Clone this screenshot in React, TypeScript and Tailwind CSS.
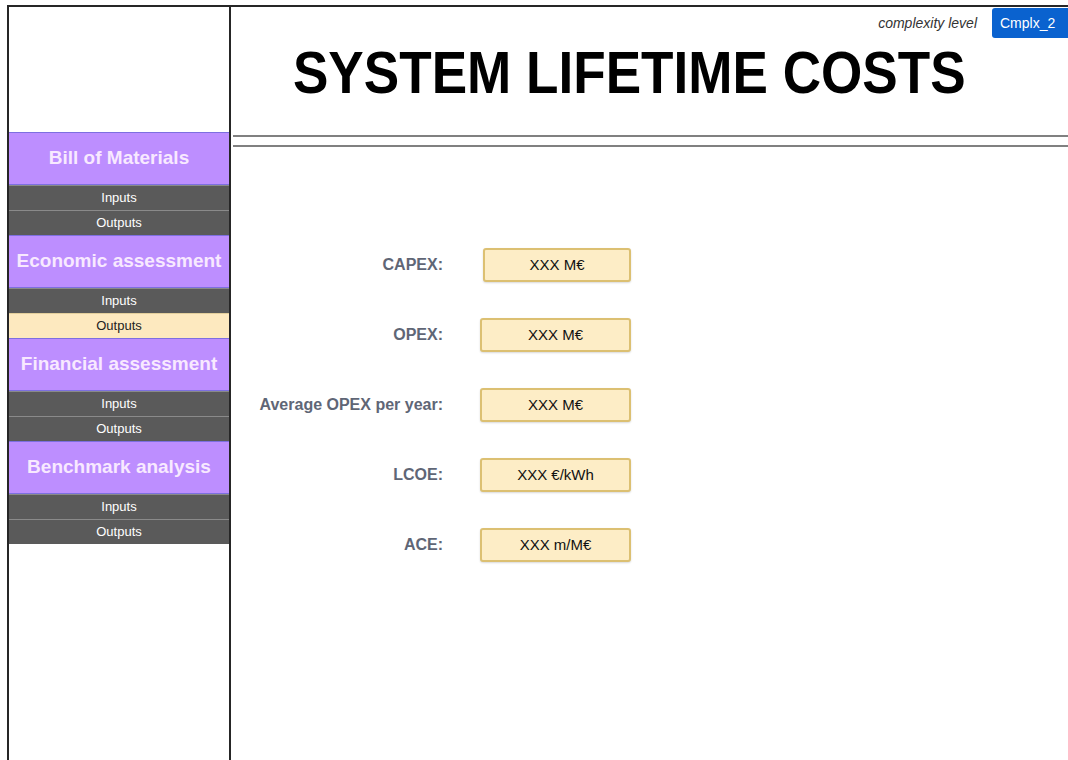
import { Fragment } from 'react'

const sections = [
  { title: 'Bill of Materials', active: null },
  { title: 'Economic assessment', active: 'Outputs' },
  { title: 'Financial assessment', active: null },
  { title: 'Benchmark analysis', active: null },
]

const results = [
  { label: 'CAPEX:', value: 'XXX M€' },
  { label: 'OPEX:', value: 'XXX M€' },
  { label: 'Average OPEX per year:', value: 'XXX M€' },
  { label: 'LCOE:', value: 'XXX €/kWh' },
  { label: 'ACE:', value: 'XXX m/M€' },
]

function NavLink({ label, active }: { label: string; active: boolean }) {
  return (
    <div
      className={
        active
          ? 'h-[25px] flex items-center justify-center bg-[#fde9bf] border-t border-[#e3cf9c] text-[13px] text-[#222]'
          : 'h-[25px] flex items-center justify-center bg-[#5a5a5a] border-t border-[#8a8a8a] text-[13px] text-white'
      }
    >
      {label}
    </div>
  )
}

export default function App() {
  return (
    <div
      className="w-[1068px] h-[760px] overflow-hidden bg-white pl-[7px] pt-[5px]"
      style={{ fontFamily: '"Liberation Sans", Arial, sans-serif' }}
    >
      <div className="flex h-[800px] border-l-2 border-t-2 border-[#262626]">
        {/* Sidebar navigation */}
        <aside className="w-[222px] shrink-0 border-r-2 border-[#262626] flex flex-col">
          <div className="h-[125px]" />
          {sections.map((s) => (
            <div key={s.title} className="flex flex-col">
              <div className="h-[53px] flex items-center justify-center bg-[#bd8eff] border-y border-[#7d6fe0] text-[19px] font-bold text-[#f8e9ff]">
                {s.title}
              </div>
              <NavLink label="Inputs" active={s.active === 'Inputs'} />
              <NavLink label="Outputs" active={s.active === 'Outputs'} />
            </div>
          ))}
        </aside>

        {/* Main panel */}
        <main className="flex-1 flex flex-col">
          <div className="h-[128px] flex flex-col">
            <div className="flex justify-end items-center gap-[15px] pt-[1px]">
              <span className="italic text-[14px] text-[#333]">complexity level</span>
              <span className="bg-[#0a62cf] text-white text-[14px] h-[30px] w-[76px] pl-[8px] flex items-center rounded-tl-[3px] rounded-bl-[3px]">
                Cmplx_2
              </span>
            </div>
            <h1 className="pl-[70px] mt-[4px] text-[60px] leading-[62px] font-bold text-black origin-left scale-x-[0.885] whitespace-nowrap">
              SYSTEM LIFETIME COSTS
            </h1>
          </div>

          <div className="ml-[2px] flex flex-col gap-[8px]">
            <div className="h-[2px] bg-[#808080]" />
            <div className="h-[2px] bg-[#808080]" />
          </div>

          {/* Cost summary */}
          <div className="mt-[101px] grid grid-cols-[212px_151px] gap-x-[37px] gap-y-[36px] items-center">
            {results.map((r, i) => (
              <Fragment key={r.label}>
                <span className="text-right text-[16px] font-bold text-[#5f6676]">{r.label}</span>
                <div
                  className={
                    'h-[34px] flex items-center justify-center bg-[#fdedc6] border-2 border-[#dcc072] rounded-[3px] shadow-[0_1px_2px_rgba(0,0,0,0.15)] text-[15px] text-[#111] ' +
                    (i === 0 ? 'ml-[3px]' : '')
                  }
                >
                  {r.value}
                </div>
              </Fragment>
            ))}
          </div>
        </main>
      </div>
    </div>
  )
}
